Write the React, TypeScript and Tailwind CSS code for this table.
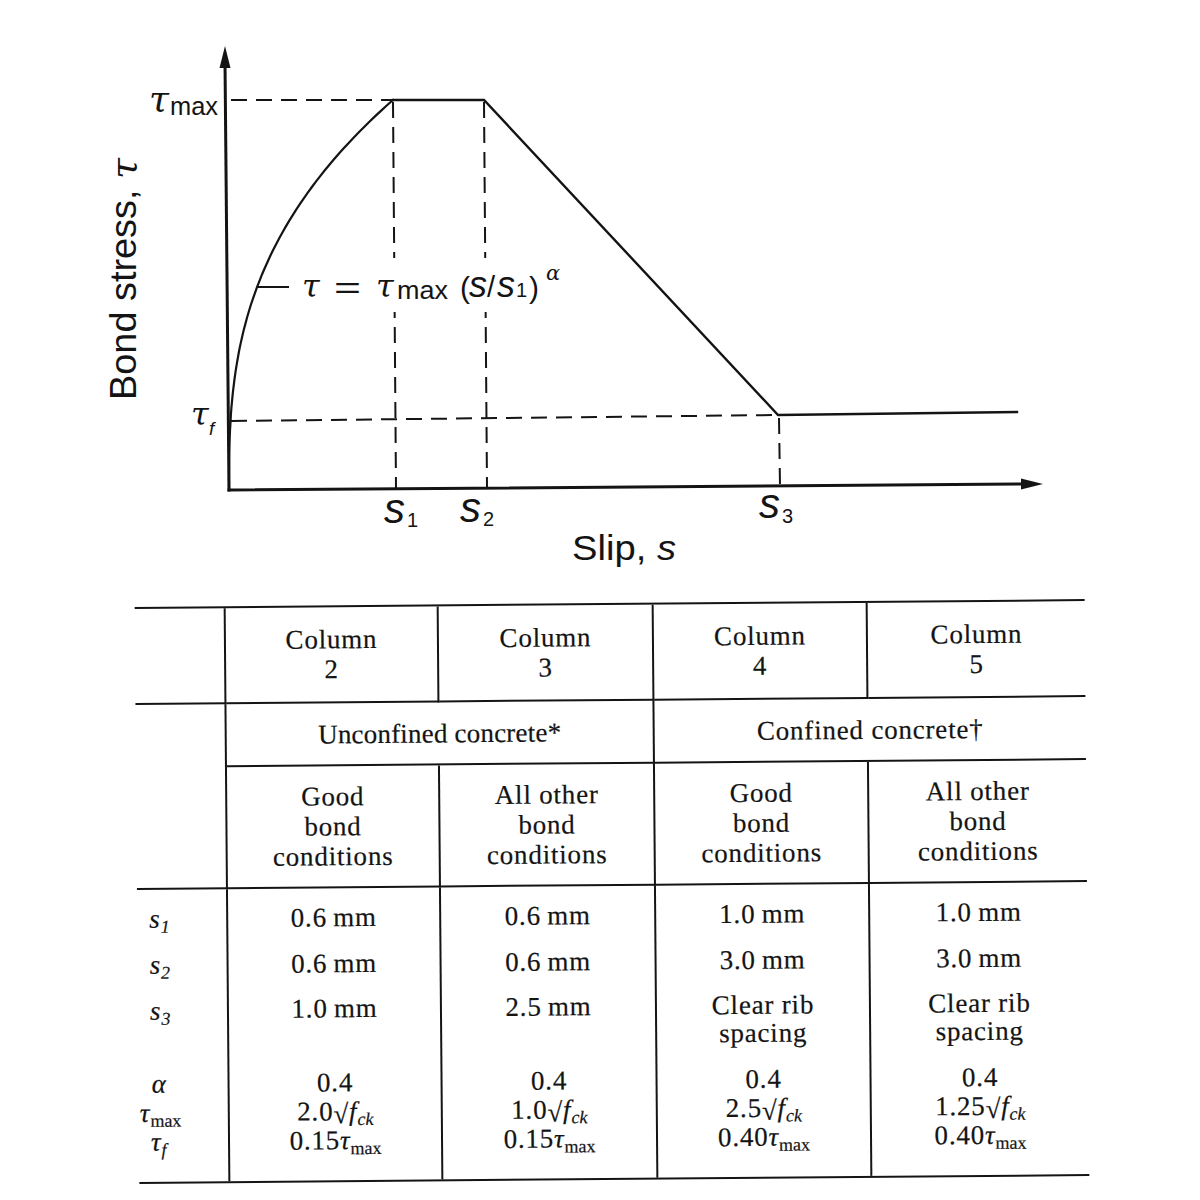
import React from "react";

// bond stress – slip curve, drawn as it sits in the scan (axes slightly tilted)
const INK = "#141414";

const curvePoints = () => {
  const pts: string[] = [];
  for (let i = 0; i <= 60; i++) {
    const t = Math.pow(i / 60, 2.2);
    const x = 229 + 164 * t;
    const y = 490 - 390 * Math.pow(t, 0.37);
    pts.push(`${x.toFixed(1)},${y.toFixed(1)}`);
  }
  return pts.join(" ");
};

const Chart = () => {
  const sans = "'Liberation Sans', Arial, sans-serif";
  const greek = "'DejaVu Serif', 'Liberation Serif', serif";
  return (
    <svg width="1200" height="580" viewBox="0 0 1200 580" className="block">
      <g stroke={INK} fill="none" strokeLinecap="square">
        {/* axes */}
        <line x1="225" y1="62" x2="229" y2="490" strokeWidth="3" />
        <line x1="229" y1="490" x2="1026" y2="484" strokeWidth="3" />
        {/* dashed guides */}
        <g strokeWidth="2" strokeDasharray="16 9" strokeLinecap="butt">
          <line x1="231" y1="100" x2="393" y2="100" />
          <line x1="231" y1="421" x2="778" y2="415" />
          <line x1="393" y1="102" x2="396" y2="488" />
          <line x1="484" y1="102" x2="487" y2="487" />
          <line x1="779" y1="418" x2="780" y2="486" />
        </g>
        {/* curve */}
        <polyline points={curvePoints()} strokeWidth="2.2" />
        <polyline points="393,100 484,100 778,415 1017,412" strokeWidth="2.4" strokeLinejoin="miter" />
        {/* leader */}
        <line x1="259" y1="287" x2="288" y2="287" strokeWidth="2" />
      </g>
      <polygon points="225,46 219.5,68 230.5,68" fill={INK} />
      <polygon points="1043,484 1021,478.5 1021,489.5" fill={INK} />

      {/* clear band behind the formula */}
      <rect x="296" y="258" width="272" height="54" fill="#fff" />

      {/* axis titles */}
      <text
        transform="translate(136 279) rotate(-90)"
        textAnchor="middle"
        fontFamily={sans}
        fontSize="36"
        fill={INK}
        textLength="242"
        lengthAdjust="spacingAndGlyphs"
      >
        Bond stress,{" "}
        <tspan fontFamily={greek} fontStyle="italic">
          τ
        </tspan>
      </text>
      <text x="572" y="560" fontFamily={sans} fontSize="35" fill={INK} textLength="104" lengthAdjust="spacingAndGlyphs">
        Slip, <tspan fontStyle="italic">s</tspan>
      </text>

      {/* tau max / tau f */}
      <text x="149" y="111" fontFamily={greek} fontStyle="italic" fontSize="36" fill={INK}>
        τ
      </text>
      <text x="170" y="115" fontFamily={sans} fontSize="26" fill={INK} textLength="48" lengthAdjust="spacingAndGlyphs">
        max
      </text>
      <text x="191" y="425" fontFamily={greek} fontStyle="italic" fontSize="32" fill={INK}>
        τ
      </text>
      <text x="209" y="435" fontFamily={sans} fontStyle="italic" fontSize="19" fill={INK}>
        f
      </text>

      {/* formula */}
      <g fill={INK}>
        <text x="302" y="297" fontFamily={greek} fontStyle="italic" fontSize="32">
          τ
        </text>
        <text x="334" y="298" fontFamily={sans} fontSize="30" textLength="27" lengthAdjust="spacingAndGlyphs">
          =
        </text>
        <text x="376" y="297" fontFamily={greek} fontStyle="italic" fontSize="32">
          τ
        </text>
        <text x="397" y="299" fontFamily={sans} fontSize="26" textLength="51" lengthAdjust="spacingAndGlyphs">
          max
        </text>
        <text x="460" y="298" fontFamily={sans} fontSize="30">
          (
        </text>
        <text x="469" y="297" fontFamily={sans} fontSize="36" fontStyle="italic">
          s
        </text>
        <text x="487" y="297" fontFamily={sans} fontSize="29">
          /
        </text>
        <text x="497" y="297" fontFamily={sans} fontSize="36" fontStyle="italic">
          s
        </text>
        <text x="516" y="297" fontFamily={sans} fontSize="20">
          1
        </text>
        <text x="529" y="298" fontFamily={sans} fontSize="30">
          )
        </text>
        <text x="546" y="280" fontFamily={greek} fontStyle="italic" fontSize="21">
          α
        </text>
      </g>

      {/* slip marks */}
      <g fill={INK} fontFamily={sans}>
        <text x="384" y="523" fontSize="42" fontStyle="italic">
          s
        </text>
        <text x="407" y="527" fontSize="20">
          1
        </text>
        <text x="460" y="522" fontSize="42" fontStyle="italic">
          s
        </text>
        <text x="483" y="526" fontSize="20">
          2
        </text>
        <text x="759" y="518" fontSize="42" fontStyle="italic">
          s
        </text>
        <text x="782" y="523" fontSize="20">
          3
        </text>
      </g>
    </svg>
  );
};

type Col = { s1: string; s2: string; s3: string[]; a: string; k: string; tf: string };

const cols: Col[] = [
  { s1: "0.6\u2009mm", s2: "0.6\u2009mm", s3: ["1.0\u2009mm"], a: "0.4", k: "2.0", tf: "0.15" },
  { s1: "0.6\u2009mm", s2: "0.6\u2009mm", s3: ["2.5\u2009mm"], a: "0.4", k: "1.0", tf: "0.15" },
  { s1: "1.0\u2009mm", s2: "3.0\u2009mm", s3: ["Clear rib", "spacing"], a: "0.4", k: "2.5", tf: "0.40" },
  { s1: "1.0\u2009mm", s2: "3.0\u2009mm", s3: ["Clear rib", "spacing"], a: "0.4", k: "1.25", tf: "0.40" },
];

const Sub = ({ children, italic }: { children: React.ReactNode; italic?: boolean }) => (
  <sub className={`text-[18px] tracking-normal ${italic ? "italic" : ""}`}>{children}</sub>
);

const DataCell = ({ c, last }: { c: Col; last?: boolean }) => (
  <div className={`flex flex-col items-center pt-[14px] leading-[30px] ${last ? "" : "border-r-2 border-[#141414]"}`}>
    <div className="h-[46px]">{c.s1}</div>
    <div className="h-[46px]">{c.s2}</div>
    <div className="flex h-[73px] flex-col items-center leading-[28px]">
      {c.s3.map((l) => (
        <div key={l}>{l}</div>
      ))}
    </div>
    <div className="h-[31px]">{c.a}</div>
    <div className="h-[29px] leading-[26px]">
      {c.k}
      <span className="relative top-[3px]">√</span>
      <span className="italic">f</span>
      <Sub italic>ck</Sub>
    </div>
    <div className="leading-[26px]">
      {c.tf}
      <span className="italic">τ</span>
      <Sub>max</Sub>
    </div>
  </div>
);

const Table = () => (
  <div className="ml-[137px] mt-[23px] grid w-[950px] rotate-[-0.47deg] grid-cols-[91px_213px_215px_214px_217px] grid-rows-[96px_63px_122px_292px] border-y-2 border-[#141414] font-['Liberation_Serif',serif] text-[27px] tracking-[0.8px] text-[#141414] [-webkit-text-stroke:0.2px_#141414]">
    {/* header row */}
    <div className="border-r-2 border-b-2 border-[#141414]" />
    {[2, 3, 4, 5].map((n) => (
      <div
        key={n}
        className={`flex flex-col items-center justify-center border-b-2 border-[#141414] leading-[30px] ${n < 5 ? "border-r-2" : ""}`}
      >
        <div>Column</div>
        <div>{n}</div>
      </div>
    ))}

    {/* group row */}
    <div className="row-span-2 border-r-2 border-b-2 border-[#141414]" />
    <div className="col-span-2 flex items-center justify-center border-r-2 border-b-2 border-[#141414] leading-[30px] tracking-[0.2px]">
      Unconfined concrete*
    </div>
    <div className="col-span-2 flex items-center justify-center border-b-2 border-[#141414] leading-[30px]">
      Confined concrete†
    </div>

    {/* bond condition row */}
    {[
      ["Good", "bond", "conditions"],
      ["All other", "bond", "conditions"],
      ["Good", "bond", "conditions"],
      ["All other", "bond", "conditions"],
    ].map((lines, i) => (
      <div
        key={i}
        className={`flex flex-col items-center justify-center border-b-2 border-[#141414] leading-[30px] ${i < 3 ? "border-r-2" : ""}`}
      >
        {lines.map((l) => (
          <div key={l}>{l}</div>
        ))}
      </div>
    ))}

    {/* parameter rows */}
    <div className="flex flex-col border-r-2 border-[#141414] pt-[14px] leading-[30px]">
      <div className="h-[46px] pl-[12px] italic">
        s<Sub>1</Sub>
      </div>
      <div className="h-[46px] pl-[12px] italic">
        s<Sub>2</Sub>
      </div>
      <div className="h-[73px] pl-[12px] italic">
        s<Sub>3</Sub>
      </div>
      <div className="h-[31px] pl-[13px] italic">α</div>
      <div className="h-[29px] pl-[1px] leading-[26px]">
        <span className="italic">τ</span>
        <Sub>max</Sub>
      </div>
      <div className="pl-[12px] leading-[26px]">
        <span className="italic">τ</span>
        <Sub italic>f</Sub>
      </div>
    </div>
    {cols.map((c, i) => (
      <DataCell key={i} c={c} last={i === cols.length - 1} />
    ))}
  </div>
);

export default function App() {
  return (
    <div className="h-[1200px] w-[1200px] overflow-hidden bg-white">
      <Chart />
      <Table />
    </div>
  );
}
